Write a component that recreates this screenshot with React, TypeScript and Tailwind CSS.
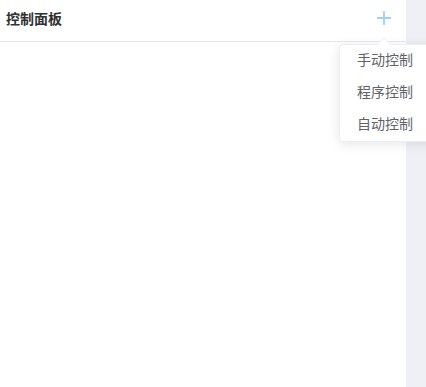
import React from "react";

export default function App() {
  const items = ["手动控制", "程序控制", "自动控制"];
  return (
    <div
      className="relative flex h-[387px] w-[426px] overflow-hidden bg-[#eef0f5]"
      style={{ fontFamily: '"Noto Sans CJK SC", "Noto Sans", sans-serif' }}
    >
      <div className="flex h-full w-[406px] flex-col bg-white">
        <div className="flex h-[42px] items-center justify-between border-b border-[#e6e8ee] pl-[6px] pr-[15px]">
          <span className="-mt-[5px] text-[14px] font-bold leading-none text-[#303133]">控制面板</span>
          <svg width="14" height="14" viewBox="0 0 14 14" className="-mt-[5px]">
            <path d="M7 0V14M0 7H14" stroke="#a0cfff" strokeWidth="1.8" />
          </svg>
        </div>
        <div className="flex-1" />
      </div>

      <div className="absolute left-[339px] top-[44px] w-[100px] rounded-[4px] border border-[#ebeef5] bg-white py-0 shadow-[0_2px_12px_rgba(0,0,0,0.1)]">
        <div className="absolute left-[39px] top-[-6px] h-[10px] w-[10px] rotate-45 border-l border-t border-[#ebeef5] bg-white" />
        {items.map((t) => (
          <div key={t} className="relative flex h-[32px] items-center pb-[4px] pl-[17px] text-[14px] leading-none text-[#606266]">
            {t}
          </div>
        ))}
      </div>
    </div>
  );
}
